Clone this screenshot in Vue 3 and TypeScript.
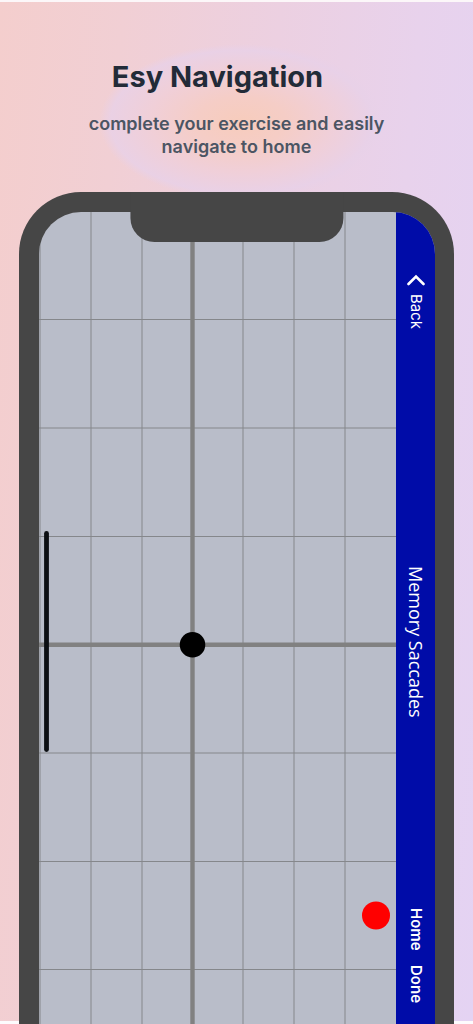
<script setup lang="ts">
const columns: number[] = [1, 52, 103, 204, 255, 306]
const rows: number[] = [107.5, 216, 324.5, 541, 649.5, 757.5]
</script>

<template>
  <main class="page">
    <header class="intro">
      <h1 class="title">Esy Navigation</h1>
      <p class="subtitle">complete your exercise and easily navigate to home</p>
    </header>
    <section class="phone" aria-label="Memory Saccades exercise">
      <div class="notch"></div>
      <div class="screen">
        <svg class="field" viewBox="0 0 357 812" role="img" aria-label="Exercise grid">
          <g stroke="#85878b" stroke-width="1">
            <line v-for="x in columns" :key="'c' + x" :x1="x" y1="0" :x2="x" y2="812" />
            <line v-for="y in rows" :key="'r' + y" x1="0" :y1="y" x2="357" :y2="y" />
          </g>
          <g stroke="#818181" stroke-width="4.4">
            <line x1="153.5" y1="0" x2="153.5" y2="812" />
            <line x1="0" y1="432.7" x2="357" y2="432.7" />
          </g>
          <line x1="7.5" y1="321.5" x2="7.5" y2="537.5" stroke="#0c0f12" stroke-width="4.8" stroke-linecap="round" />
          <circle cx="153.5" cy="432.7" r="12.8" fill="#000" />
          <circle cx="337" cy="703.5" r="14" fill="#f00" />
        </svg>
        <nav class="bar">
          <div class="side">
            <button class="action back" type="button">
              <svg class="chevron" viewBox="0 0 18 12" aria-hidden="true">
                <path d="M1.5 10 9 2.5 16.5 10" fill="none" stroke="#fff" stroke-width="2.6" stroke-linecap="round" />
              </svg>
              Back
            </button>
          </div>
          <h2 class="heading">Memory Saccades</h2>
          <div class="side end">
            <button class="action" type="button">Home</button>
            <button class="action" type="button">Done</button>
          </div>
        </nav>
      </div>
    </section>
  </main>
</template>

<style>
body {
  margin: 0;
  background: #fff;
}
</style>

<style scoped>
.page {
  padding: 60px 19px 0;
  border-top: 2px solid #fcf7f9;
  border-bottom: 3px solid #fdfbfd;
  background:
    radial-gradient(ellipse 142px 78px at 51% 120px, #f7ccbc 0%, #f5cdc6 32%, rgba(240, 207, 216, 0.9) 65%, rgba(232, 209, 232, 0.8) 92%, rgba(232, 209, 232, 0) 100%) no-repeat,
    linear-gradient(95deg, #f4cecd 0%, #f1cfd4 22%, #ecd0e1 50%, #e8d2ec 75%, #e4d3f3 100%);
  font-family: Inter, "Liberation Sans", sans-serif;
}
.intro {
  text-align: center;
}
.title {
  margin: 0 38px 0 0;
  font-size: 29px;
  line-height: 30px;
  font-weight: 700;
  color: #222b38;
}
.subtitle {
  max-width: 320px;
  margin: 20px auto 34px;
  font-size: 18px;
  line-height: 23px;
  font-weight: 600;
  color: #4b5563;
}
.phone {
  position: relative;
  display: flow-root;
  margin-bottom: -3px;
  padding: 20px 19px 0 20px;
  border-radius: 62px 62px 0 0;
  background: #464646;
}
.notch {
  position: absolute;
  top: 0;
  left: 50%;
  width: 49%;
  height: 50px;
  border-radius: 0 0 24px 24px;
  background: #464646;
  transform: translateX(-50%);
}
.screen {
  display: flex;
  overflow: hidden;
  border-radius: 42px 42px 0 0;
  background: #b9bdc9;
}
.field {
  flex: 1;
  display: block;
  min-width: 0;
}
.bar {
  display: flex;
  align-items: center;
  box-sizing: border-box;
  width: 39px;
  padding: 62px 0 21px;
  background: #000ca8;
  color: #fff;
  writing-mode: vertical-rl;
}
.side {
  flex: 1;
  display: flex;
}
.end {
  justify-content: flex-end;
  gap: 14px;
}
.action {
  display: flex;
  align-items: center;
  padding: 0;
  border: 0;
  background: none;
  color: inherit;
  font-family: inherit;
  font-size: 15px;
  line-height: 20px;
  font-weight: 600;
  writing-mode: vertical-rl;
  cursor: pointer;
}
.back {
  gap: 8px;
  font-weight: 400;
}
.chevron {
  width: 18px;
  height: 12px;
}
.heading {
  margin: 6px 0 0;
  font-family: "Open Sans", "Noto Sans", sans-serif;
  font-size: 18px;
  line-height: 24px;
  font-weight: 400;
}
</style>
